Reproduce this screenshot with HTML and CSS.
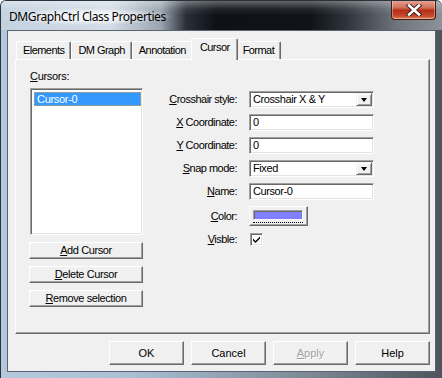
FILE: index.html
```html
<!DOCTYPE html>
<html>
<head>
    <title>DMGraphCtrl Class Properties</title>
    <link rel="stylesheet" href="styles.css">
</head>
<body>
    <div class="window">
        <div class="titlebar">
            <span class="title">DMGraphCtrl Class Properties</span>
            <div class="close-btn">
                <svg width="16" height="12" viewBox="0 0 16 12">
                    <path d="M3 1.5 L13 10.5 M13 1.5 L3 10.5" stroke="#3b1a14" stroke-width="4.4" stroke-linecap="square"/>
                    <path d="M3 1.5 L13 10.5 M13 1.5 L3 10.5" stroke="#fff" stroke-width="2.6" stroke-linecap="square"/>
                </svg>
            </div>
        </div>

        <div class="client">
            <div class="tabs">
                <div class="tab">Elements</div>
                <div class="tab">DM Graph</div>
                <div class="tab">Annotation</div>
                <div class="tab active">Cursor</div>
                <div class="tab">Format</div>
            </div>

            <div class="panel">
                <div class="left-col">
                    <div class="list-label"><u>C</u>ursors:</div>
                    <div class="listbox">
                        <div class="list-item selected">Cursor-0</div>
                    </div>
                    <div class="btn side-btn"><u>A</u>dd Cursor</div>
                    <div class="btn side-btn"><u>D</u>elete Cursor</div>
                    <div class="btn side-btn"><u>R</u>emove selection</div>
                </div>

                <div class="form">
                    <label class="form-label"><u>C</u>rosshair style:</label>
                    <div class="field combo">
                        <span class="value">Crosshair X &amp; Y</span>
                        <span class="drop"><i class="arrow"></i></span>
                    </div>

                    <label class="form-label"><u>X</u> Coordinate:</label>
                    <div class="field"><span class="value">0</span></div>

                    <label class="form-label"><u>Y</u> Coordinate:</label>
                    <div class="field"><span class="value">0</span></div>

                    <label class="form-label"><u>S</u>nap mode:</label>
                    <div class="field combo">
                        <span class="value">Fixed</span>
                        <span class="drop"><i class="arrow"></i></span>
                    </div>

                    <label class="form-label"><u>N</u>ame:</label>
                    <div class="field"><span class="value">Cursor-0</span></div>

                    <label class="form-label"><u>C</u>olor:</label>
                    <div class="color-cell">
                        <div class="btn color-btn">
                            <div class="swatch"></div>
                            <div class="focus-line"></div>
                        </div>
                    </div>

                    <label class="form-label"><u>V</u>isble:</label>
                    <div class="check-cell">
                        <div class="checkbox">
                            <svg width="9" height="9" viewBox="0 0 9 9">
                                <path d="M1 3.5 L3.5 6 L8 1.5 L8 3.5 L3.5 8 L1 5.5 Z" fill="#000"/>
                            </svg>
                        </div>
                    </div>
                </div>
            </div>

            <div class="footer">
                <div class="btn dlg-btn">OK</div>
                <div class="btn dlg-btn">Cancel</div>
                <div class="btn dlg-btn disabled"><u>A</u>pply</div>
                <div class="btn dlg-btn">Help</div>
            </div>
        </div>
    </div>
</body>
</html>
```

FILE: styles.css
```css
body {
    margin: 0;
    background: #fff;
    font-family: 'Liberation Sans', Arial, sans-serif;
    font-size: 11px;
    color: #000;
}
.window {
    width: 442px;
    height: 378px;
    box-sizing: border-box;
    display: flex;
    flex-direction: column;
    border: 1px solid #2a323c;
    border-bottom: none;
    border-right: none;
    border-radius: 6px 6px 0 0;
    background: linear-gradient(to right, #b4c9dd 0%, #a9bfd4 30%, #7d8894 70%, #4d545c 100%);
    overflow: hidden;
}
.titlebar {
    position: relative;
    height: 29px;
    flex: none;
    background:
        linear-gradient(to bottom, rgba(255,255,255,0.35) 0, rgba(255,255,255,0.08) 8px, rgba(255,255,255,0) 14px),
        linear-gradient(to right, #c4d2e0 0, #d3dce6 110px, #9aa4ae 160px, #2a3038 185px, #0e1217 215px, #10141a 310px, #2e343b 345px, #6d747c 395px, #8d939a 442px);
}
.title {
    position: absolute;
    left: 8px;
    top: 7px;
    font-family: 'Noto Sans', 'Open Sans', sans-serif;
    font-size: 12px;
    letter-spacing: -0.4px;
    color: #000;
    padding: 0 6px;
    margin-left: -6px;
    background: radial-gradient(ellipse at center, rgba(255,255,255,0.75) 30%, rgba(255,255,255,0) 72%);
}
.close-btn {
    position: absolute;
    top: -1px;
    right: 6px;
    width: 43px;
    height: 19px;
    border: 1px solid #4a1810;
    border-top: none;
    border-radius: 0 0 4px 4px;
    background: linear-gradient(to bottom, #e8a898 0, #d0705a 40%, #b52e14 55%, #c84a2c 85%, #e08a60 100%);
    box-shadow: inset 0 0 0 1px rgba(255,255,255,0.35);
    display: flex;
    align-items: center;
    justify-content: center;
}
.client {
    flex: 1;
    margin: 0 6px 6px 6px;
    border: 1px solid #5a6470;
    background: #f0f0f0;
    display: flex;
    flex-direction: column;
    padding: 0 5px 0 7px;
}

/* tabs */
.tabs {
    display: flex;
    align-items: flex-end;
    height: 21px;
    margin-top: 7px;
    padding-left: 1px;
    position: relative;
    z-index: 1;
}
.tab {
    height: 18px;
    line-height: 17px;
    padding: 0 6px;
    letter-spacing: -0.55px;
    border: 1px solid #fff;
    border-right: 1px solid #696969;
    border-bottom: none;
    border-radius: 2px 2px 0 0;
    box-shadow: inset -1px 0 #a0a0a0;
    background: #f0f0f0;
    box-sizing: border-box;
}
.tab.active {
    line-height: 17px;
    margin: 0 -2px -1px -2px;
    padding: 0 7px 0 8px;
    position: relative;
    z-index: 2;
    height: 22px;
}
.panel {
    height: 275px;
    box-sizing: border-box;
    border: 1px solid;
    border-color: #fff #696969 #696969 #fff;
    box-shadow: inset -1px -1px #a0a0a0;
    display: flex;
    align-items: flex-start;
    padding: 10px 0 0 13px;
}

/* left column */
.left-col {
    width: 114px;
    display: flex;
    flex-direction: column;
}
.list-label {
    height: 13px;
    line-height: 13px;
    margin-left: 1px;
    letter-spacing: -0.3px;
}
.listbox {
    margin: 5px 0 0 1px;
    height: 147px;
    box-sizing: border-box;
    background: #fff;
    border: 1px solid;
    border-color: #a0a0a0 #fff #fff #a0a0a0;
    box-shadow: inset 1px 1px #696969, inset -1px -1px #e3e3e3;
    padding: 3px 1px 0 3px;
}
.list-item {
    height: 14px;
    line-height: 12px;
    box-sizing: border-box;
    padding-left: 2px;
    letter-spacing: -0.3px;
}
.list-item.selected {
    background: #3399ff;
    color: #fff;
    border: 1px dotted #e0a050;
}
.btn {
    background: #f0f0f0;
    box-sizing: border-box;
    border: 1px solid;
    border-color: #fff #696969 #696969 #fff;
    box-shadow: inset -1px -1px #a0a0a0;
    text-align: center;
}
.side-btn {
    height: 17px;
    line-height: 15px;
    letter-spacing: -0.4px;
    margin-top: 7px;
}
.side-btn:first-of-type { margin-top: 9px; }

/* form */
.form {
    margin: 21px 0 0 11px;
    display: grid;
    grid-template-columns: 83px 125px;
    column-gap: 12px;
    row-gap: 6px;
    align-items: center;
}
.form-label {
    text-align: right;
    letter-spacing: -0.5px;
    line-height: 13px;
}
.field {
    height: 17px;
    box-sizing: border-box;
    background: #fff;
    border: 1px solid;
    border-color: #a0a0a0 #fff #fff #a0a0a0;
    box-shadow: inset 1px 1px #696969, inset -1px -1px #e3e3e3;
    display: flex;
    align-items: center;
    padding: 0 2px 0 3px;
}
.field .value {
    flex: 1;
    letter-spacing: -0.4px;
    line-height: 13px;
}
.drop {
    width: 16px;
    height: 13px;
    box-sizing: border-box;
    background: #f0f0f0;
    border: 1px solid;
    border-color: #f0f0f0 #696969 #696969 #f0f0f0;
    box-shadow: inset 1px 1px #fff, inset -1px -1px #a0a0a0;
    display: flex;
    align-items: center;
    justify-content: center;
    margin-right: -1px;
}
.arrow {
    width: 0;
    height: 0;
    border-left: 3.5px solid transparent;
    border-right: 3.5px solid transparent;
    border-top: 4px solid #000;
    margin-top: 1px;
}
.color-cell, .check-cell {
    height: 20px;
    display: flex;
    align-items: center;
}
.check-cell { height: 14px; }
.color-btn {
    width: 59px;
    height: 20px;
    padding: 3px 4px 0 3px;
}
.swatch {
    height: 10px;
    box-sizing: border-box;
    background: #8080ff;
    border: 1px solid;
    border-color: #a0a0a0 #fff #fff #a0a0a0;
    box-shadow: inset 1px 1px #696969;
}
.focus-line {
    margin-top: 2px;
    border-bottom: 1px dotted #000;
}
.checkbox {
    width: 13px;
    height: 13px;
    box-sizing: border-box;
    background: #fff;
    border: 1px solid;
    border-color: #a0a0a0 #fff #fff #a0a0a0;
    box-shadow: inset 1px 1px #696969, inset -1px -1px #e3e3e3;
    display: flex;
    align-items: center;
    justify-content: center;
    margin-left: 1px;
}

/* bottom buttons */
.footer {
    display: flex;
    justify-content: flex-end;
    gap: 7px;
    margin-top: 7px;
}
.dlg-btn {
    width: 75px;
    height: 24px;
    line-height: 22px;
}
.dlg-btn.disabled {
    color: #a0a0a0;
    text-shadow: 1px 1px #fff;
}
```
